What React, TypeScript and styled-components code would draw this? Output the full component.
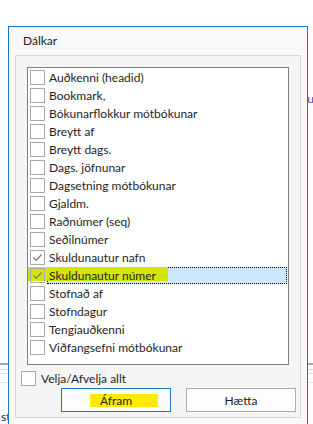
import React from 'react';
import styled, { createGlobalStyle } from 'styled-components';

const GlobalStyle = createGlobalStyle`
  html, body {
    margin: 0;
    padding: 0;
    background: #ffffff;
  }
  body {
    font-family: Lato, "Liberation Sans", sans-serif;
    color: #1e1e1e;
  }
`;

const Screen = styled.div`
  position: relative;
  width: 313px;
  height: 424px;
  overflow: hidden;
  background: #ffffff;
`;

// the window behind the dialog, only its edges show
const Backdrop = styled.div`
  display: flex;
  flex-direction: column;
  height: 100%;
`;

const LinkText = styled.div`
  margin-top: 92px;
  text-align: right;
  font-size: 12px;
  line-height: 14px;
  color: #4d47a8;
  margin-right: -1px;
`;

const GridHead = styled.div`
  margin-top: 257px;
  height: 4px;
  border-top: 2px solid #a8a8a8;
  border-bottom: 1px solid #d6d6d6;
`;

const GridRow = styled.div<{ $h: number }>`
  height: ${(p) => p.$h}px;
  border-bottom: 1px solid #e6e6e6;
`;

const FooterText = styled.div`
  margin-top: auto;
  font-size: 12px;
  line-height: 14px;
  padding-left: 1px;
  color: #222;
`;

const Dialog = styled.div`
  position: absolute;
  left: 8px;
  top: 26px;
  width: 300px;
  height: 420px;
  box-sizing: border-box;
  border: 1px solid #1a76cc;
  background: #f9f9f9;
  display: flex;
  flex-direction: column;
`;

const Title = styled.div`
  height: 28px;
  line-height: 27px;
  padding-left: 14px;
  font-size: 12px;
  color: #222;
`;

const Panel = styled.div`
  margin: 0 6px;
  height: 363px;
  box-sizing: border-box;
  border: 1px solid #d9d9d9;
  background: #f5f5f5;
  padding: 11px 4px 5px 5px;
  display: flex;
  flex-direction: column;
`;

const ListBox = styled.div`
  margin: 0 7px 0 6px;
  height: 298px;
  box-sizing: border-box;
  border: 1px solid #808080;
  background: #ffffff;
`;

const Row = styled.div`
  position: relative;
  display: flex;
  align-items: center;
  height: 18px;
  padding-left: 2px;
  font-size: 12px;
`;

const Box = styled.span<{ $clear?: boolean }>`
  position: relative;
  z-index: 2;
  flex: none;
  width: 15px;
  height: 15px;
  box-sizing: border-box;
  border: 1px solid #a9a9a9;
  background: ${(p) => (p.$clear ? 'transparent' : '#ffffff')};
  display: flex;
  align-items: center;
  justify-content: center;
`;

const Label = styled.span<{ $selected?: boolean }>`
  flex: 1;
  height: 17px;
  display: flex;
  align-items: center;
  margin-left: 2px;
  margin-right: 1px;
  padding-left: 2px;
  box-sizing: border-box;
  white-space: nowrap;
  background: ${(p) => (p.$selected ? '#cce8ff' : 'transparent')};
  outline: ${(p) => (p.$selected ? '1px dotted #000' : 'none')};
  outline-offset: -1px;
`;

const LabelText = styled.span`
  position: relative;
  z-index: 2;
`;

// marker stroke drawn over the selected entry
const Marker = styled.span`
  position: absolute;
  z-index: 1;
  left: 0;
  top: 1px;
  width: 140px;
  height: 14px;
  background: #d4e600;
`;

const SelectAll = styled.label`
  display: flex;
  align-items: center;
  margin-top: 6px;
  height: 15px;
  font-size: 12px;
  gap: 5px;
`;

const Buttons = styled.div`
  display: flex;
  justify-content: flex-end;
  gap: 15px;
  margin-top: auto;
`;

const Button = styled.button<{ $primary?: boolean }>`
  width: 110px;
  height: 24px;
  box-sizing: border-box;
  padding: 0;
  border: 1px solid ${(p) => (p.$primary ? '#1a76cc' : '#adadad')};
  background: #fdfdfd;
  font-family: Lato, "Liberation Sans", sans-serif;
  font-size: 12px;
  color: #1e1e1e;
  display: flex;
  align-items: center;
  justify-content: center;
`;

const ButtonMark = styled.span`
  background: #ffea00;
  padding: 0 26px 0 10px;
  margin-left: 16px;
  line-height: 13px;
`;

const Check = () => (
  <svg width="11" height="11" viewBox="0 0 11 11">
    <polyline points="1.5,5.5 4.2,8.3 9.5,2.5" fill="none" stroke="#7a7a7a" strokeWidth="1.2" />
  </svg>
);

interface Column {
  name: string;
  checked?: boolean;
  selected?: boolean;
}

const columns: Column[] = [
  { name: 'Auðkenni (headid)' },
  { name: 'Bookmark,' },
  { name: 'Bókunarflokkur mótbókunar' },
  { name: 'Breytt af' },
  { name: 'Breytt dags.' },
  { name: 'Dags. jöfnunar' },
  { name: 'Dagsetning mótbókunar' },
  { name: 'Gjaldm.' },
  { name: 'Raðnúmer (seq)' },
  { name: 'Seðilnúmer' },
  { name: 'Skuldunautur nafn', checked: true },
  { name: 'Skuldunautur númer', checked: true, selected: true },
  { name: 'Stofnað af' },
  { name: 'Stofndagur' },
  { name: 'Tengiauðkenni' },
  { name: 'Viðfangsefni mótbókunar' },
];

const App: React.FC = () => {
  return (
    <>
      <GlobalStyle />
      <Screen>
        <Backdrop>
          <LinkText>u</LinkText>
          <GridHead />
          <GridRow $h={3} />
          <GridRow $h={8} />
          <FooterText>st</FooterText>
        </Backdrop>

        <Dialog>
          <Title>Dálkar</Title>
          <Panel>
            <ListBox>
              {columns.map((c) => (
                <Row key={c.name}>
                  {c.selected && <Marker />}
                  <Box $clear={c.selected}>{c.checked && <Check />}</Box>
                  <Label $selected={c.selected}>
                    <LabelText>{c.name}</LabelText>
                  </Label>
                </Row>
              ))}
            </ListBox>
            <SelectAll>
              <Box />
              Velja/Afvelja allt
            </SelectAll>
            <Buttons>
              <Button $primary>
                <ButtonMark>Áfram</ButtonMark>
              </Button>
              <Button>Hætta</Button>
            </Buttons>
          </Panel>
        </Dialog>
      </Screen>
    </>
  );
};

export default App;
